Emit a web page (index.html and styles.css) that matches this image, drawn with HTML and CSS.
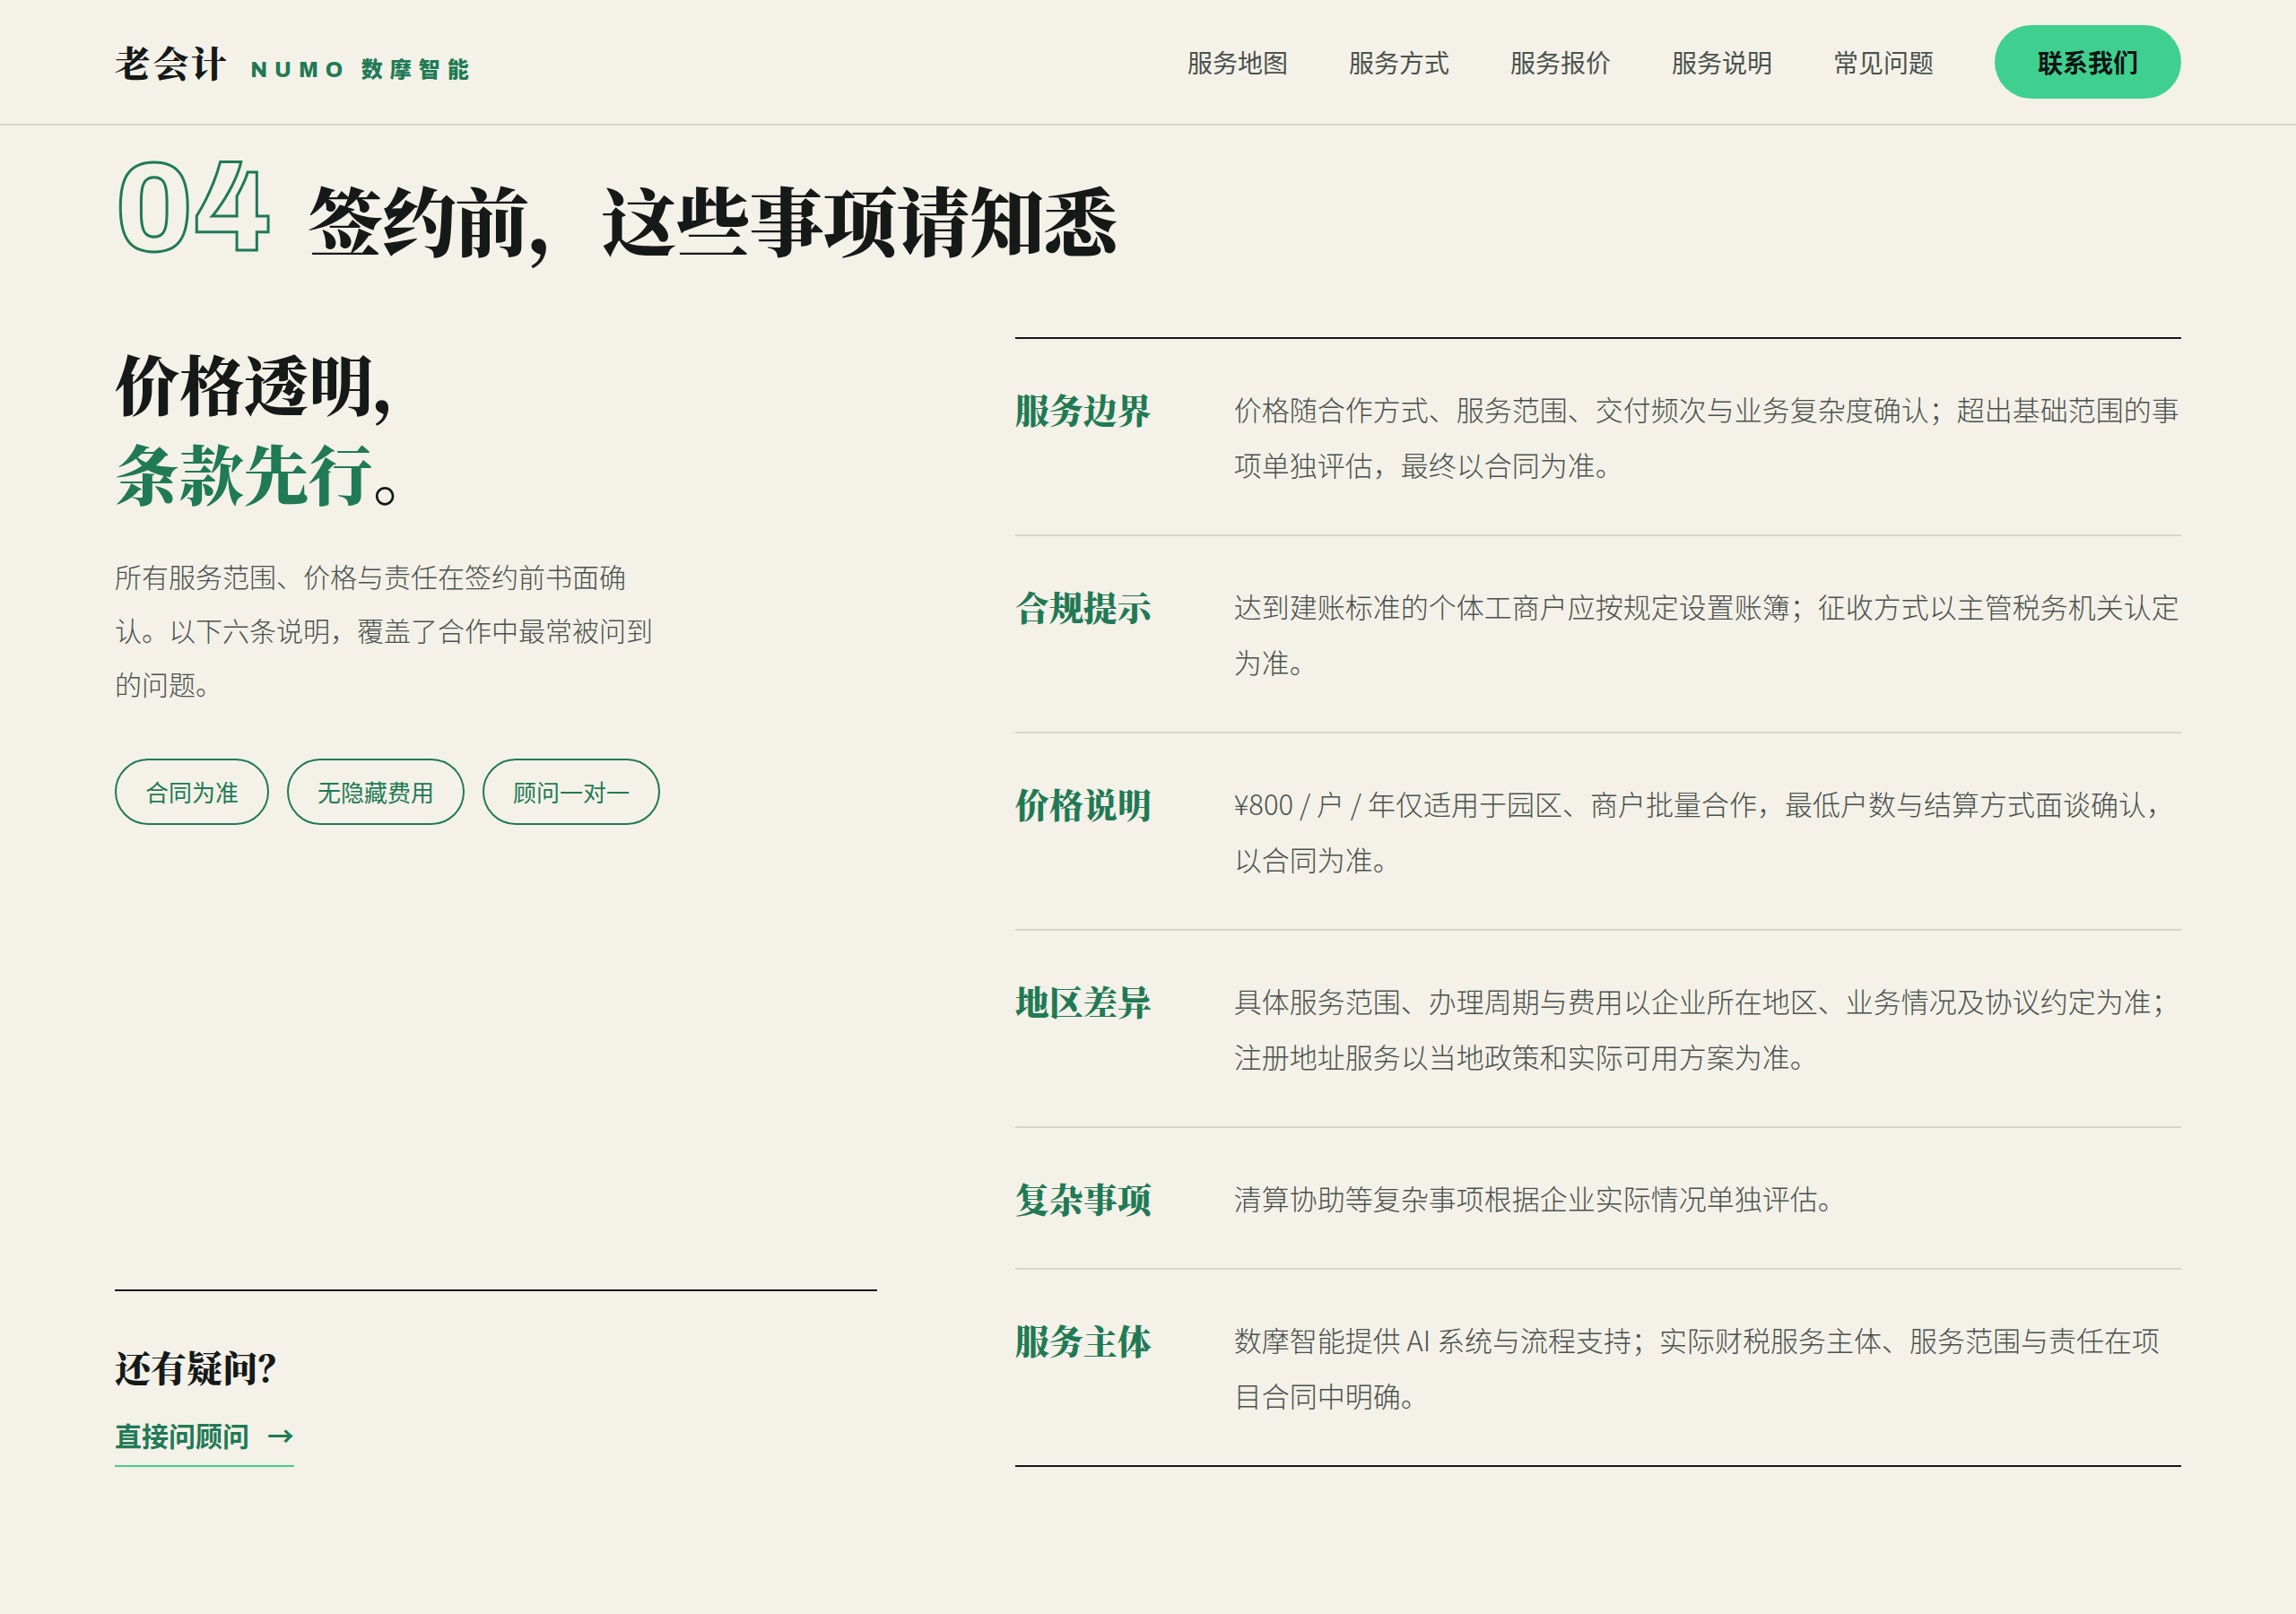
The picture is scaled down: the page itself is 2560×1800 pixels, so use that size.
FILE: index.html
```html
<!DOCTYPE html>
<html lang="zh-CN">
<head>
<meta charset="utf-8">
<meta name="viewport" content="width=device-width, initial-scale=1">
<title>老会计 - 服务说明</title>
<link rel="stylesheet" href="styles.css">
</head>
<body>
<header class="topbar">
  <a class="brand" href="#">
    <span class="brand-name">老会计</span>
    <span class="brand-sub">NUMO 数摩智能</span>
  </a>
  <nav class="nav">
    <a href="#map">服务地图</a>
    <a href="#modes">服务方式</a>
    <a href="#pricing">服务报价</a>
    <a href="#terms">服务说明</a>
    <a href="#faq">常见问题</a>
    <a class="btn" href="#contact">联系我们</a>
  </nav>
</header>

<main class="section" id="terms">
  <div class="section-head">
    <span class="num">04</span>
    <h2>签约前，这些事项请知悉</h2>
  </div>

  <div class="cols">
    <div class="intro">
      <h3>价格透明，<br><em>条款先行</em>。</h3>
      <p>所有服务范围、价格与责任在签约前书面确认。以下六条说明，覆盖了合作中最常被问到的问题。</p>
      <ul class="tags">
        <li>合同为准</li>
        <li>无隐藏费用</li>
        <li>顾问一对一</li>
      </ul>
      <div class="ask">
        <h4>还有疑问？</h4>
        <a href="#contact">直接问顾问 <span>→</span></a>
      </div>
    </div>

    <dl class="terms">
      <div class="row">
        <dt>服务边界</dt>
        <dd>价格随合作方式、服务范围、交付频次与业务复杂度确认；超出基础范围的事项单独评估，最终以合同为准。</dd>
      </div>
      <div class="row">
        <dt>合规提示</dt>
        <dd>达到建账标准的个体工商户应按规定设置账簿；征收方式以主管税务机关认定为准。</dd>
      </div>
      <div class="row">
        <dt>价格说明</dt>
        <dd>¥800 / 户 / 年仅适用于园区、商户批量合作，最低户数与结算方式面谈确认，以合同为准。</dd>
      </div>
      <div class="row">
        <dt>地区差异</dt>
        <dd>具体服务范围、办理周期与费用以企业所在地区、业务情况及协议约定为准；注册地址服务以当地政策和实际可用方案为准。</dd>
      </div>
      <div class="row">
        <dt>复杂事项</dt>
        <dd>清算协助等复杂事项根据企业实际情况单独评估。</dd>
      </div>
      <div class="row">
        <dt>服务主体</dt>
        <dd>数摩智能提供 AI 系统与流程支持；实际财税服务主体、服务范围与责任在项目合同中明确。</dd>
      </div>
    </dl>
  </div>
</main>
</body>
</html>
```
FILE: styles.css
```css
:root {
  --bg: #f4f1e8;
  --ink: #151918;
  --muted: #4a524e;
  --green: #1f7a55;
  --mint: #3fd08f;
  --line: #d7d5cd;
  --serif: "Noto Serif CJK SC", "Noto Serif SC", "Source Han Serif SC", "Noto Sans CJK SC", serif;
  --sans: "Noto Sans CJK SC", sans-serif;
  --display: Archivo, "Noto Sans CJK SC", sans-serif;
}

* { box-sizing: border-box; margin: 0; padding: 0; }

body {
  background: var(--bg);
  color: var(--ink);
  font-family: var(--sans);
  font-size: 30px;
}

a { color: inherit; text-decoration: none; }
ul { list-style: none; }

/* header */
.topbar {
  display: flex;
  align-items: center;
  justify-content: space-between;
  padding: 28px 5%;
  border-bottom: 2px solid var(--line);
}
.brand { display: flex; align-items: baseline; gap: 24px; }
.brand-name {
  font-family: var(--serif);
  font-size: 40px;
  font-weight: 900;
  letter-spacing: .06em;
  line-height: 56px;
}
.brand-sub {
  color: var(--green);
  font-family: var(--display);
  font-size: 24px;
  font-weight: 800;
  letter-spacing: 8px;
}
.nav { display: flex; align-items: center; gap: 68px; color: var(--muted); font-size: 28px; }
.btn {
  padding: 0 48px;
  border-radius: 41px;
  background: var(--mint);
  color: #0f1413;
  font-weight: 700;
  line-height: 82px;
}

/* section heading */
.section { padding: 20px 5% 160px; }
.section-head { display: flex; align-items: baseline; gap: 40px; }
.num {
  color: transparent;
  font-family: var(--display);
  font-size: 140px;
  font-weight: 800;
  line-height: 144px;
  -webkit-text-stroke: 3px var(--green);
}
.section-head h2 {
  font-family: var(--serif);
  font-size: 83px;
  font-weight: 900;
  letter-spacing: -1px;
  line-height: 116px;
}

.cols {
  display: grid;
  grid-template-columns: 85fr 130fr;
  gap: 6vw;
  margin-top: 72px;
}

/* left column */
.intro { display: flex; flex-direction: column; align-items: flex-start; }
.intro h3 {
  font-family: var(--serif);
  font-size: 72px;
  font-weight: 900;
  line-height: 100px;
}
.intro h3 em { color: var(--green); font-style: normal; }
.intro p {
  max-width: 600px;
  margin-top: 36px;
  color: var(--muted);
  font-weight: 300;
  line-height: 60px;
}
.tags { display: flex; gap: 20px; margin-top: 54px; }
.tags li {
  padding: 0 32px;
  border: 2px solid var(--green);
  border-radius: 37px;
  color: var(--green);
  font-size: 26px;
  line-height: 70px;
}
.ask {
  display: flex;
  flex-direction: column;
  align-items: flex-start;
  width: 100%;
  margin-top: auto;
  padding-top: 56px;
  border-top: 2px solid var(--ink);
}
.ask h4 { font-family: var(--serif); font-size: 40px; font-weight: 900; line-height: 56px; }
.ask a {
  display: flex;
  gap: 20px;
  margin-top: 24px;
  padding-bottom: 10px;
  border-bottom: 2px solid var(--mint);
  color: var(--green);
  font-weight: 700;
  line-height: 48px;
}

/* terms list */
.terms { border-top: 2px solid var(--ink); }
.row {
  display: grid;
  grid-template-columns: 200px 1fr;
  gap: 44px;
  padding: 47px 0;
  border-bottom: 2px solid var(--line);
}
.row:last-child { border-bottom-color: var(--ink); }
.row dt {
  color: var(--green);
  font-family: var(--serif);
  font-size: 38px;
  font-weight: 900;
  line-height: 62px;
}
.row dd { color: var(--muted); font-size: 31px; font-weight: 300; line-height: 62px; }
```
